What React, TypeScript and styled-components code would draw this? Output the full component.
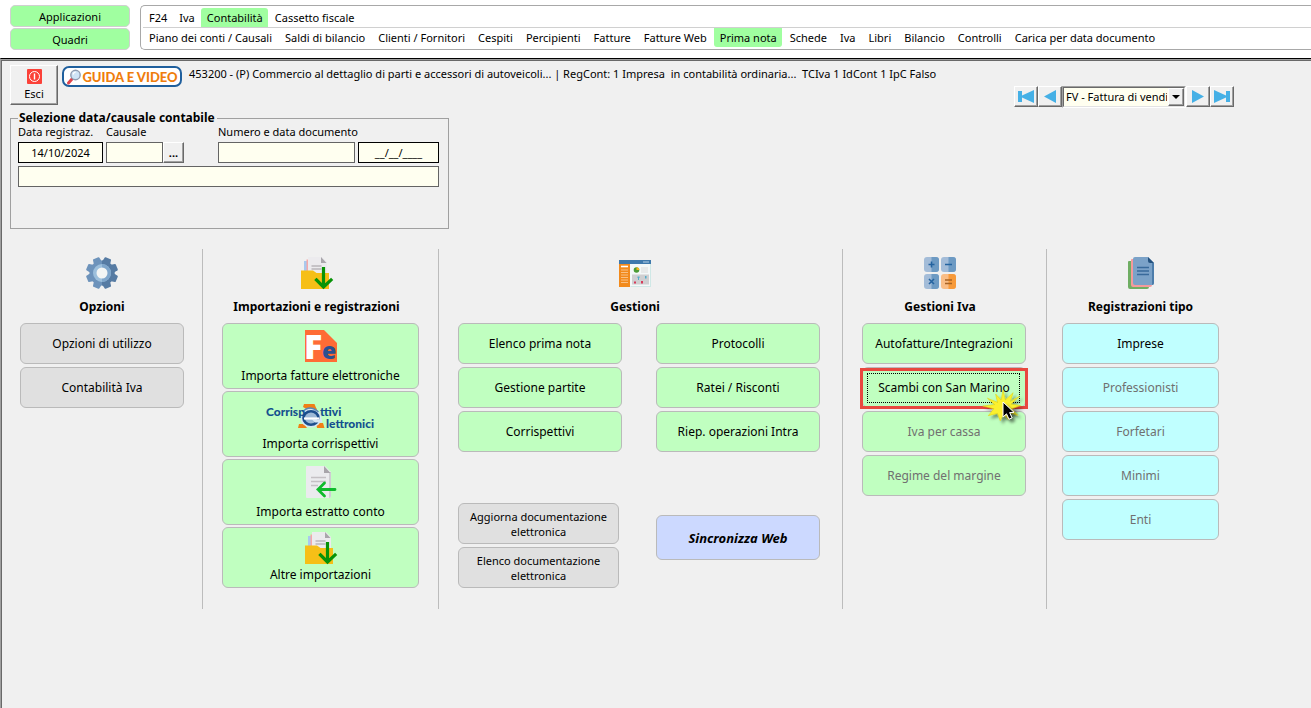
import React from 'react';
import styled, { createGlobalStyle, css } from 'styled-components';

const GlobalStyle = createGlobalStyle`
  *, *::before, *::after { box-sizing: border-box; }
  html, body, #root { height: 100%; }
  body {
    margin: 0;
    background: #f0f0f0;
    color: #000;
    font: 11px/16px "Noto Sans", "Open Sans", sans-serif;
  }
  button, input, select { font: inherit; color: inherit; margin: 0; padding: 0; }
  svg { display: block; overflow: visible; }
`;

const Page = styled.div`
  min-height: 100%;
  display: flex;
  flex-direction: column;
`;

/* ---------- top navigation ---------- */

const Header = styled.header`
  display: flex;
  align-items: flex-start;
  gap: 10px;
  padding: 5px 0 8px 10px;
  background: #fff;
`;

const ModeButtons = styled.div`
  display: flex;
  flex-direction: column;
  gap: 1px;
  width: 120px;
  flex: none;
`;

const ModeButton = styled.button`
  height: 22px;
  padding-top: 2px;
  border: 1px solid #d0d0d0;
  border-radius: 5px;
  background: #a0ffa0;
`;

const NavBox = styled.nav`
  flex: 1;
  min-width: 0;
  border: 1px solid #a8a8a8;
  border-right: 0;
  border-radius: 5px 0 0 5px;
  padding-left: 2px;
`;

const NavRow = styled.div`
  display: flex;
  height: 22px;
  white-space: nowrap;

  &:first-child { gap: 1px; border-bottom: 1px solid #d0d0d0; padding-top: 2px; }
  &:last-child { gap: 2px; height: 21px; padding-bottom: 2px; }
`;

const NavLink = styled.a<{ $active?: boolean }>`
  padding: 1px 5px 0 6px;
  line-height: 18px;
  color: #000;
  text-decoration: none;
  ${(p) => p.$active && css`background: #a0ffa0;`}

  ${NavRow}:first-child & { border-radius: 3px 3px 0 0; }
  ${NavRow}:last-child & { border-radius: 0 0 3px 3px; }
`;

/* ---------- work area ---------- */

const Main = styled.main`
  flex: 1;
  border: solid #696969;
  border-width: 1px 0 0 1px;
  padding: 4px 0 0 8px;
`;

const Frame = styled.div`
  flex: 1;
  display: flex;
  flex-direction: column;
  border-top: 1px solid #000;
  border-left: 1px solid #a0a0a0;
`;

const FrameTop = styled.div`
  height: 1px;
  background: #a0a0a0;
`;

const Toolbar = styled.div`
  display: flex;
  align-items: flex-start;
  padding-right: 77px;
`;

const raised = css`
  background: #f0f0f0;
  border: 1px solid;
  border-color: #fff #696969 #696969 #fff;
  box-shadow: inset -1px -1px #a0a0a0;
`;

const ExitButton = styled.button`
  ${raised}
  width: 48px;
  height: 40px;
  margin-right: 4px;
  display: flex;
  flex-direction: column;
  align-items: center;
  justify-content: center;
  gap: 2px;
`;

const GuideLink = styled.a`
  width: 120px;
  height: 21px;
  margin-top: 1px;
  margin-right: 7px;
  display: flex;
  align-items: center;
  justify-content: center;
  border: 2px solid #1f5f9d;
  border-radius: 7px;
  background: #fff;
  color: #ef7d0c;
  font: 900 13px/16px Lato, sans-serif;
  text-decoration: none;
  white-space: nowrap;
`;

const Company = styled.p`
  margin: 0;
  padding-top: 1px;
  white-space: pre;
`;

const RecordNav = styled.div`
  display: flex;
  margin: 21px 0 0 auto;
  padding-left: 16px;
`;

const StepButton = styled.button`
  ${raised}
  width: 24px;
  height: 21px;
  display: grid;
  place-items: center;
`;

const SelectBox = styled.div`
  position: relative;
  width: 124px;
  height: 22px;
  border: 1px solid;
  border-color: #a0a0a0 #fff #fff #a0a0a0;
`;

const TypeSelect = styled.select`
  appearance: none;
  width: 100%;
  height: 20px;
  padding: 0 17px 0 2px;
  border: 1px solid #696969;
  border-right-color: #e3e3e3;
  border-bottom-color: #e3e3e3;
  border-radius: 0;
  background: #fffff0;
  text-overflow: clip;
`;

const SelectArrow = styled.span`
  ${raised}
  position: absolute;
  top: 1px;
  right: 1px;
  bottom: 1px;
  width: 16px;
  display: grid;
  place-items: center;
  pointer-events: none;
`;

/* ---------- date / causale form ---------- */

const Group = styled.fieldset`
  width: 439px;
  max-width: 100%;
  min-height: 119px;
  margin: 2px 0 0;
  padding: 0 9px 0 7px;
  border: 1px solid #a0a0a0;
`;

const GroupTitle = styled.legend`
  padding: 0 2px 0 1px;
  font-size: 12px;
  font-weight: 700;
  line-height: 16px;
`;

const Fields = styled.div`
  display: flex;
  gap: 3px;
`;

const Field = styled.div<{ $grow?: boolean; $gap?: number }>`
  flex: ${(p) => (p.$grow ? '1' : 'none')};
  margin-right: ${(p) => p.$gap ?? 0}px;
`;

const FieldLabel = styled.label`
  display: block;
  margin-bottom: 4px;
  line-height: 12px;
`;

const Controls = styled.div<{ $gap?: number }>`
  display: flex;
  gap: ${(p) => p.$gap ?? 0}px;
`;

const TextBox = styled.input<{ $width?: number; $strong?: boolean }>`
  height: 21px;
  min-width: 0;
  border: 1px solid ${(p) => (p.$strong ? '#000' : '#646464')};
  border-radius: 0;
  background: #fffff0;
  text-align: center;
  ${(p) => (p.$width ? css`width: ${p.$width}px; flex: none;` : css`width: 100%; flex: 1;`)}
`;

const Description = styled(TextBox)`
  display: block;
  margin-top: 3px;
`;

const BrowseButton = styled.button`
  ${raised}
  width: 21px;
  height: 21px;
  font-weight: 700;
`;

/* ---------- command sections ---------- */

const Sections = styled.div`
  display: grid;
  grid-template-columns: 193fr 236fr 404fr 204fr 264fr;
  margin-top: 20px;
`;

const Section = styled.section<{ $start?: number; $end?: number }>`
  min-height: 360px;
  min-width: 0;
  padding: 8px ${(p) => p.$end ?? 19}px 20px ${(p) => p.$start ?? 19}px;
  border-right: 1px solid #bcbcbc;
  &:last-child { border-right: 0; }
`;

const SectionHead = styled.header<{ $shift?: boolean }>`
  display: flex;
  flex-direction: column;
  align-items: center;
  gap: 10px;
  padding-right: ${(p) => (p.$shift ? 8 : 0)}px;
`;

const SectionTitle = styled.h2`
  margin: 0 0 8px;
  font-size: 12px;
  line-height: 16px;
  font-weight: 700;
  white-space: nowrap;
`;

const Stack = styled.div<{ $gap?: number; $top?: number }>`
  display: flex;
  flex-direction: column;
  gap: ${(p) => p.$gap ?? 3}px;
  margin-top: ${(p) => p.$top ?? 0}px;
`;

const TwoColumns = styled.div`
  display: grid;
  grid-template-columns: 1fr 1fr;
  column-gap: 34px;
`;

type Tone = 'green' | 'grey' | 'cyan' | 'blue';
const tones: Record<Tone, string> = {
  green: '#c0ffc0',
  grey: '#e0e0e0',
  cyan: '#c0ffff',
  blue: '#ccd9ff',
};

const Command = styled.button<{ $tone: Tone }>`
  min-height: 41px;
  width: 100%;
  border: 1px solid #bababa;
  border-radius: 6px;
  background: ${(p) => tones[p.$tone]};
  font-size: 12px;
  line-height: 16px;
  &:disabled { color: #707070; }
`;

const SmallCommand = styled(Command)`
  font-size: 11px;
  line-height: 15px;
  padding: 0 4px;
`;

const DocumentStack = styled(Stack)`
  padding-right: 3px;
`;

const SyncCommand = styled(Command)`
  align-self: start;
  min-height: 45px;
  margin-top: 63px;
  font-size: 13px;
  font-style: italic;
  font-weight: 700;
`;

const ImportCommand = styled(Command)<{ $compact?: boolean }>`
  min-height: ${(p) => (p.$compact ? 61 : 66)}px;
  display: flex;
  flex-direction: column;
  align-items: center;
  justify-content: flex-end;
  gap: ${(p) => (p.$compact ? 3 : 6)}px;
  padding-bottom: 4px;
`;

const Highlight = styled.div`
  position: relative;
`;

const HighlightFrame = styled.span`
  position: absolute;
  inset: 1px -2px -1px;
  border: 3px solid #e8483f;
  pointer-events: none;

  &::after {
    content: '';
    position: absolute;
    inset: 2px 5px 3px 4px;
    border: 1px dotted #000;
  }
`;

const ClickMark = styled.span`
  position: absolute;
  right: -2px;
  top: 22px;
  pointer-events: none;
`;

/* ---------- drawings ---------- */

const PowerIcon = () => (
  <svg width="15" height="15" viewBox="0 0 15 15" aria-hidden="true">
    <rect width="15" height="15" rx="1" fill="#fb4138" />
    <g fill="none" stroke="#fff">
      <circle cx="7.500" cy="7.500" r="5" />
      <path d="M7.500 4.500v6" strokeWidth="1.400" />
    </g>
  </svg>
);

const LensIcon = () => (
  <svg width="16" height="16" viewBox="0 0 16 16" aria-hidden="true">
    <path d="M2.500 14 6 10" stroke="#e0434b" strokeWidth="3" strokeLinecap="round" />
    <circle cx="9.500" cy="6" r="4.700" fill="#cfe4f7" stroke="#8f9bb0" strokeWidth="1.400" />
    <path d="M7 5.500q.6-2 2.600-2.300" fill="none" stroke="#fff" strokeWidth="1.200" />
  </svg>
);

const FirstIcon = () => (
  <svg width="16" height="13" viewBox="0 0 16 13" fill="#45b0e6" aria-hidden="true">
    <path d="M0 1h4v4.500L16 0v13L4 7.500V12H0z" />
  </svg>
);
const PrevIcon = () => (
  <svg width="12" height="13" viewBox="0 0 12 13" fill="#45b0e6" aria-hidden="true">
    <path d="M12 0v13L0 6.500z" />
  </svg>
);
const NextIcon = () => (
  <svg width="12" height="13" viewBox="0 0 12 13" fill="#45b0e6" aria-hidden="true">
    <path d="M0 0v13l12-6.500z" />
  </svg>
);
const LastIcon = () => (
  <svg width="16" height="13" viewBox="0 0 16 13" fill="#45b0e6" aria-hidden="true">
    <path d="M16 1h-4v4.500L0 0v13l12-5.500V12h4z" />
  </svg>
);
const DownIcon = () => (
  <svg width="8" height="4" viewBox="0 0 8 4" aria-hidden="true">
    <path d="M0 0h8L4 4z" />
  </svg>
);

const tooth = 'M11.600 6 12.600.6q.2-.6.8-.6h5.200q.6 0 .8.600l1 5.400z';

const GearIcon = () => (
  <svg width="32" height="32" viewBox="0 0 32 32" aria-hidden="true">
    <g fill="#6d93bb">
      {[202.5, 247.5, 292.5, 337.5].map((a) => (
        <path key={a} d={tooth} transform={`rotate(${a} 16 16)`} />
      ))}
      <circle cx="16" cy="16" r="12.500" />
    </g>
    <path d="M16 3.500a12.500 12.500 0 0 1 0 25z" fill="#567ba3" />
    <g fill="#567ba3">
      {[22.5, 67.5, 112.5, 157.5].map((a) => (
        <path key={a} d={tooth} transform={`rotate(${a} 16 16)`} />
      ))}
    </g>
    <circle cx="16" cy="16" r="9" fill="#9cbfdc" />
    <path d="M16 7a9 9 0 0 1 0 18z" fill="#7fa6cb" />
    <circle cx="16" cy="16" r="5.500" fill="#f3f5f4" />
  </svg>
);

const FolderIcon = () => (
  <svg width="32" height="32" viewBox="0 0 32 32" aria-hidden="true">
    <path d="M3 4h6v12H3z" fill="#a9c9ee" />
    <path d="M5.500 2.500H10V15H5.500z" fill="#f5a9a9" />
    <path d="M7 0h14l5 5v12H7z" fill="#ecebee" />
    <path d="M20 0l5.500 6H20z" fill="#a9a6ab" />
    <path d="M10.500 9h10M10.500 12h10" stroke="#b9b6ba" strokeWidth="1.300" />
    <path d="M0 13.500h12l3.500 2.500H28v16H0z" fill="#f6bf17" />
    <path d="M22.500 11.500V29M15.500 23l7 7 7.500-7" fill="none" stroke="#079307" strokeWidth="3.200" strokeLinecap="square" />
  </svg>
);

const StatementIcon = () => (
  <svg width="32" height="32" viewBox="0 0 32 32" aria-hidden="true">
    <path d="M2 0h18l6 6v24q0 2-2 2H2q-1 0-1-1V1q0-1 1-1z" fill="#ebebee" />
    <path d="M24 6h2v24q0 2-2 2z" fill="#cfcdd2" />
    <path d="M19 0l6.500 7H19z" fill="#a8a5aa" />
    <path d="M6 11.500h15M6 15.500h15M6 19.500h7" stroke="#c4c0c4" strokeWidth="1.600" />
    <path d="M30 23.500H13M19.500 17 13 23.500l6.500 6.500" fill="none" stroke="#0fbb2c" strokeWidth="2.800" strokeLinecap="round" />
  </svg>
);

const InvoiceIcon = () => (
  <svg width="32" height="32" viewBox="0 0 32 32" aria-hidden="true">
    <path d="M0 0h19l13 13v19H0z" fill="#ff6c35" />
    <text x="-1" y="29" fontFamily="Open Sans, sans-serif" fontWeight="800" fontSize="34" fill="#fff">
      F<tspan x="17" fontSize="23" fill="#2a5090">e</tspan>
    </text>
  </svg>
);

const ReceiptsLogo = () => (
  <svg width="110" height="26" viewBox="0 0 110 26" aria-hidden="true">
    <path d="M38 0h10.500l2 5h-10L37 3z" fill="#f07f16" />
    <path d="M42 4h8l4 8H41z" fill="#f07f16" />
    <path d="M33 20h5l3 4h-9z" fill="#f07f16" />
    <path d="M50 19h7l1.500 5H51z" fill="#f07f16" />
    <ellipse cx="45" cy="14" rx="10.500" ry="9.500" fill="#d6e6f4" />
    <ellipse cx="45" cy="14" rx="7.500" ry="6.800" fill="#9db9d6" stroke="#1d4e8c" strokeWidth="2.600" />
    <path d="M46 15.500h10v3h-7z" fill="#d6e6f4" />
    <path d="M38 14.500h15.500" stroke="#fff" strokeWidth="2.200" />
    <path d="M36.500 8q7-8 16 0" fill="none" stroke="#5f87b3" strokeWidth="1.500" />
    <g fontFamily="Lato, sans-serif" fontWeight="900" fontSize="12" fill="#14508f">
      <text x="0" y="12">Corrisp</text>
      <text x="54" y="12">ttivi</text>
      <text x="60" y="24">lettronici</text>
    </g>
  </svg>
);

const DashboardIcon = () => (
  <svg width="32" height="32" viewBox="0 0 32 32" aria-hidden="true">
    <path d="M0 3h32v27H0z" fill="#f4f8f8" />
    <path d="M0 3h32v4H0z" fill="#3f79ac" />
    <path d="M24 5h6" stroke="#b8d3e8" />
    <path d="M0 7h11v23H0z" fill="#f28a1c" />
    <path d="M2 9.500h7" stroke="#fff" strokeWidth="1.600" />
    <path d="M2 13h7M2 15.500h7M2 18h7M2 20.500h7M2 23h7M2 25.500h7" stroke="#f9c083" />
    <circle cx="17.500" cy="13" r="2.800" fill="#4c9b35" />
    <path d="M17.500 13v-2.800a2.800 2.800 0 0 1 2.800 2.800z" fill="#f6b31a" />
    <path d="M22 11h7M22 13h7M22 15h7" stroke="#dadada" />
    <path d="M13 17.500h17v10H13z" fill="#cfcfd1" />
    <path d="M31.500 7v23M11.500 29.500H32" stroke="#cfe8e6" />
    <path d="M15 24.500h2v2h-2zM22 24h2v2.500h-2z" fill="#d83b5a" />
    <path d="M18.500 19.500h2v1.500h-2zM19 21h1v2h-1zM26 19h1.500v2.500H26z" fill="#52aecb" />
  </svg>
);

const CalculatorIcon = () => (
  <svg width="32" height="32" viewBox="0 0 32 32" aria-hidden="true">
    <g fill="#a3bcd8">
      <rect width="15" height="15" rx="3" />
      <rect x="17" width="15" height="15" rx="3" />
      <rect y="17" width="15" height="15" rx="3" />
    </g>
    <g fill="#6d9ac3">
      <path d="M7.500 0H12a3 3 0 0 1 3 3v9a3 3 0 0 1-3 3H7.500z" />
      <path d="M24.500 0H29a3 3 0 0 1 3 3v9a3 3 0 0 1-3 3h-4.500z" />
      <path d="M7.500 17H12a3 3 0 0 1 3 3v9a3 3 0 0 1-3 3H7.500z" />
    </g>
    <rect x="17" y="17" width="15" height="15" rx="3" fill="#f9bd86" />
    <path d="M24.500 17H29a3 3 0 0 1 3 3v9a3 3 0 0 1-3 3h-4.500z" fill="#f79a3a" />
    <g stroke="#2463a0" strokeWidth="1.600">
      <path d="M7.500 4.500v6M4.500 7.500h6M21 7.500h7M5 22l5 5M10 22l-5 5" />
      <path d="M21 23h7M21 26.500h7" stroke="#a96425" />
    </g>
  </svg>
);

const DocumentsIcon = () => (
  <svg width="26" height="32" viewBox="0 0 26 32" aria-hidden="true">
    <path d="M0 5q0-1 1-1h5v24h15v2q0 2-2 2H2q-2 0-2-2z" fill="#6fae63" />
    <path d="M3 3q0-1 1-1h4v26h16q0 2-2 2H5q-2 0-2-2z" fill="#f49a9c" />
    <path d="M7 0h13l6 6v20q0 2-2 2H7q-2 0-2-2V2q0-2 2-2z" fill="#7ba2c8" />
    <path d="M24 6h2v20q0 2-2 2z" fill="#4d7dab" />
    <path d="M20 0l6 6h-4q-2 0-2-2z" fill="#24527f" />
    <path d="M9 10.500h12M9 14h12M9 17.500h12" stroke="#386a9b" strokeWidth="1.300" />
  </svg>
);

const ClickIcon = () => (
  <svg width="48" height="40" viewBox="0 0 48 40" aria-hidden="true">
    <defs>
      <filter id="click-shadow" x="-20%" y="-20%" width="150%" height="150%">
        <feDropShadow dx="3" dy="3" stdDeviation="1.500" floodOpacity="0.450" />
      </filter>
    </defs>
    <path
      d="M3 18.500 16 17 8 10l11 4.500L17 5.500l6 6.500L25 1l2.500 11L36 4l-3 9.500L43 8l-9.500 8.500 10.500 1.500-10 3.500 7 7-10-3 0 8-5.500-6-3.500 7-3-8L9 29l6-7.500z"
      transform="scale(.92)"
      fill="#fbf02f"
      stroke="#ded10e"
      strokeWidth=".6"
      filter="url(#click-shadow)"
    />
    <path
      d="M23 13v15l3.500-3.200 2.500 5.400 3-1.400-2.400-5.200 4.400-.3z"
      fill="#000"
      stroke="#fff"
      filter="url(#click-shadow)"
    />
  </svg>
);

/* ---------- content ---------- */

const modules = ['F24', 'Iva', 'Contabilità', 'Cassetto fiscale'];
const pages = [
  'Piano dei conti / Causali', 'Saldi di bilancio', 'Clienti / Fornitori', 'Cespiti', 'Percipienti',
  'Fatture', 'Fatture Web', 'Prima nota', 'Schede', 'Iva', 'Libri', 'Bilancio', 'Controlli',
  'Carica per data documento',
];

const Links = ({ items, active }: { items: string[]; active: string }) => (
  <NavRow>
    {items.map((item) => (
      <NavLink key={item} href="#" $active={item === active} aria-current={item === active ? 'page' : undefined}>
        {item}
      </NavLink>
    ))}
  </NavRow>
);

const Commands = ({ items, tone, disabled = [] }: { items: string[]; tone: Tone; disabled?: string[] }) => (
  <Stack>
    {items.map((item) => (
      <Command key={item} $tone={tone} disabled={disabled.includes(item)}>{item}</Command>
    ))}
  </Stack>
);

export default function App() {
  return (
    <Page>
      <GlobalStyle />
      <Header>
        <ModeButtons>
          <ModeButton>Applicazioni</ModeButton>
          <ModeButton>Quadri</ModeButton>
        </ModeButtons>
        <NavBox>
          <Links items={modules} active="Contabilità" />
          <Links items={pages} active="Prima nota" />
        </NavBox>
      </Header>

      <Frame>
        <FrameTop />
        <Main>
          <Toolbar>
            <ExitButton>
              <PowerIcon />
              Esci
            </ExitButton>
            <GuideLink href="#">
              <LensIcon />
              GUIDA E VIDEO
            </GuideLink>
            <Company>
              {'453200 - (P) Commercio al dettaglio di parti e accessori di autoveicoli... | RegCont: 1 Impresa  in contabilità ordinaria...  TCIva 1 IdCont 1 IpC Falso'}
            </Company>
            <RecordNav>
              <StepButton aria-label="Primo"><FirstIcon /></StepButton>
              <StepButton aria-label="Precedente"><PrevIcon /></StepButton>
              <SelectBox>
                <TypeSelect aria-label="Tipo registrazione">
                  <option>FV - Fattura di vendita</option>
                </TypeSelect>
                <SelectArrow><DownIcon /></SelectArrow>
              </SelectBox>
              <StepButton aria-label="Successivo"><NextIcon /></StepButton>
              <StepButton aria-label="Ultimo"><LastIcon /></StepButton>
            </RecordNav>
          </Toolbar>

          <Group>
            <GroupTitle>Selezione data/causale contabile</GroupTitle>
            <Fields>
              <Field>
                <FieldLabel htmlFor="data-reg">Data registraz.</FieldLabel>
                <TextBox id="data-reg" $width={85} $strong defaultValue="14/10/2024" />
              </Field>
              <Field $gap={31}>
                <FieldLabel htmlFor="causale">Causale</FieldLabel>
                <Controls>
                  <TextBox id="causale" $width={57} />
                  <BrowseButton aria-label="Cerca causale">...</BrowseButton>
                </Controls>
              </Field>
              <Field $grow>
                <FieldLabel htmlFor="numero">Numero e data documento</FieldLabel>
                <Controls $gap={3}>
                  <TextBox id="numero" />
                  <TextBox aria-label="Data documento" $width={81} $strong defaultValue="__/__/____" />
                </Controls>
              </Field>
            </Fields>
            <Description aria-label="Descrizione causale" />
          </Group>

          <Sections>
            <Section $start={10} $end={18}>
              <SectionHead>
                <GearIcon />
                <SectionTitle>Opzioni</SectionTitle>
              </SectionHead>
              <Commands tone="grey" items={['Opzioni di utilizzo', 'Contabilità Iva']} />
            </Section>

            <Section>
              <SectionHead $shift>
                <FolderIcon />
                <SectionTitle>Importazioni e registrazioni</SectionTitle>
              </SectionHead>
              <Stack $gap={2}>
                <ImportCommand $tone="green"><InvoiceIcon />Importa fatture elettroniche</ImportCommand>
                <ImportCommand $tone="green"><ReceiptsLogo />Importa corrispettivi</ImportCommand>
                <ImportCommand $tone="green"><StatementIcon />Importa estratto conto</ImportCommand>
                <ImportCommand $tone="green" $compact><FolderIcon />Altre importazioni</ImportCommand>
              </Stack>
            </Section>

            <Section $end={22}>
              <SectionHead $shift>
                <DashboardIcon />
                <SectionTitle>Gestioni</SectionTitle>
              </SectionHead>
              <TwoColumns>
                <Commands tone="green" items={['Elenco prima nota', 'Gestione partite', 'Corrispettivi']} />
                <Commands tone="green" items={['Protocolli', 'Ratei / Risconti', 'Riep. operazioni Intra']} />
                <DocumentStack $top={51}>
                  <SmallCommand $tone="grey">Aggiorna documentazione elettronica</SmallCommand>
                  <SmallCommand $tone="grey">Elenco documentazione elettronica</SmallCommand>
                </DocumentStack>
                <SyncCommand $tone="blue">Sincronizza Web</SyncCommand>
              </TwoColumns>
            </Section>

            <Section $end={20}>
              <SectionHead $shift>
                <CalculatorIcon />
                <SectionTitle>Gestioni Iva</SectionTitle>
              </SectionHead>
              <Stack>
                <Command $tone="green">Autofatture/Integrazioni</Command>
                <Highlight>
                  <Command $tone="green">Scambi con San Marino</Command>
                  <HighlightFrame />
                  <ClickMark><ClickIcon /></ClickMark>
                </Highlight>
                <Command $tone="green" disabled>Iva per cassa</Command>
                <Command $tone="green" disabled>Regime del margine</Command>
              </Stack>
            </Section>

            <Section $start={15} $end={92}>
              <SectionHead>
                <DocumentsIcon />
                <SectionTitle>Registrazioni tipo</SectionTitle>
              </SectionHead>
              <Commands
                tone="cyan"
                items={['Imprese', 'Professionisti', 'Forfetari', 'Minimi', 'Enti']}
                disabled={['Professionisti', 'Forfetari', 'Minimi', 'Enti']}
              />
            </Section>
          </Sections>
        </Main>
      </Frame>
    </Page>
  );
}
